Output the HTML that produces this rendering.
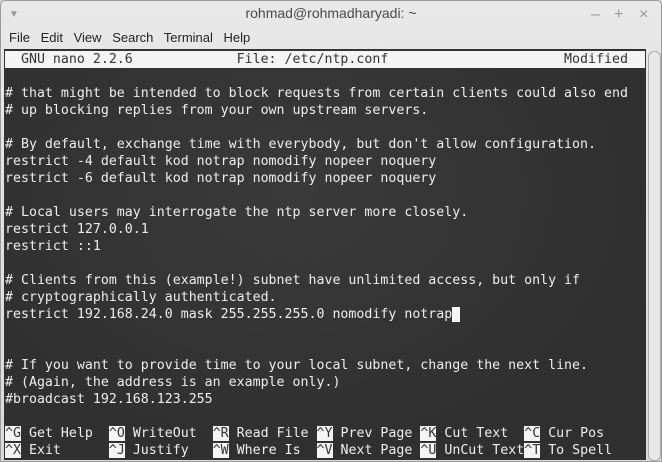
<!DOCTYPE html><html><head><style>
body{margin:0;width:662px;height:462px;overflow:hidden;background:#d6d6d6;font-family:"Liberation Sans","DejaVu Sans",sans-serif}
.win{position:absolute;left:0;top:0;width:660px;height:460px;border:1px solid #9a9a9a;border-radius:5px 5px 0 0;background:linear-gradient(#e8e8e8,#dadada);overflow:hidden}
.title{position:absolute;top:4px;left:0;width:100%;text-align:center;font-size:14px;color:#4a4a4a}
.menu{position:absolute;top:29px;left:8px;font-size:13px;color:#222;word-spacing:2px}
.menu span{margin-right:5px}
.term{position:absolute;left:3px;top:48px;width:642px;height:411px;background:radial-gradient(ellipse at 45% 35%,#3a3a3a,#303030 70%);}
pre{margin:0;position:absolute;left:1px;top:2px;font-family:"DejaVu Sans Mono",monospace;font-size:13.27px;line-height:17px;color:#eee}
.hd{background:#f4f4f4;color:#333;display:inline-block;width:640px}
.k{background:#f4f4f4;color:#333}
.cur{background:#f4f4f4}
.sb{position:absolute;left:647px;top:50px;width:11px;height:408px;border:1px solid #aaa;border-radius:6px;background:#e8e8e8}
.ctl{position:absolute;top:5px;color:#999;font-size:16px}
</style></head><body><div class="win">
<div class="ctl" style="left:8px;font-size:10px;top:8px">▼</div>
<div class="title">rohmad@rohmadharyadi: ~</div>
<div class="ctl" style="left:590px">–</div><div class="ctl" style="left:613px">+</div><div class="ctl" style="left:638px">×</div>
<div class="menu"><span>File</span> <span>Edit</span> <span>View</span> <span>Search</span> <span>Terminal</span> <span>Help</span></div>
<div class="term"><pre><span class="hd">  GNU nano 2.2.6             File: /etc/ntp.conf                      Modified</span>

# that might be intended to block requests from certain clients could also end
# up blocking replies from your own upstream servers.

# By default, exchange time with everybody, but don't allow configuration.
restrict -4 default kod notrap nomodify nopeer noquery
restrict -6 default kod notrap nomodify nopeer noquery

# Local users may interrogate the ntp server more closely.
restrict 127.0.0.1
restrict ::1

# Clients from this (example!) subnet have unlimited access, but only if
# cryptographically authenticated.
restrict 192.168.24.0 mask 255.255.255.0 nomodify notrap<span class="cur"> </span>


# If you want to provide time to your local subnet, change the next line.
# (Again, the address is an example only.)
#broadcast 192.168.123.255

<span class="k">^G</span> Get Help  <span class="k">^O</span> WriteOut  <span class="k">^R</span> Read File <span class="k">^Y</span> Prev Page <span class="k">^K</span> Cut Text  <span class="k">^C</span> Cur Pos
<span class="k">^X</span> Exit      <span class="k">^J</span> Justify   <span class="k">^W</span> Where Is  <span class="k">^V</span> Next Page <span class="k">^U</span> UnCut Text<span class="k">^T</span> To Spell</pre></div>
<div class="sb"></div>
</div></body></html>
